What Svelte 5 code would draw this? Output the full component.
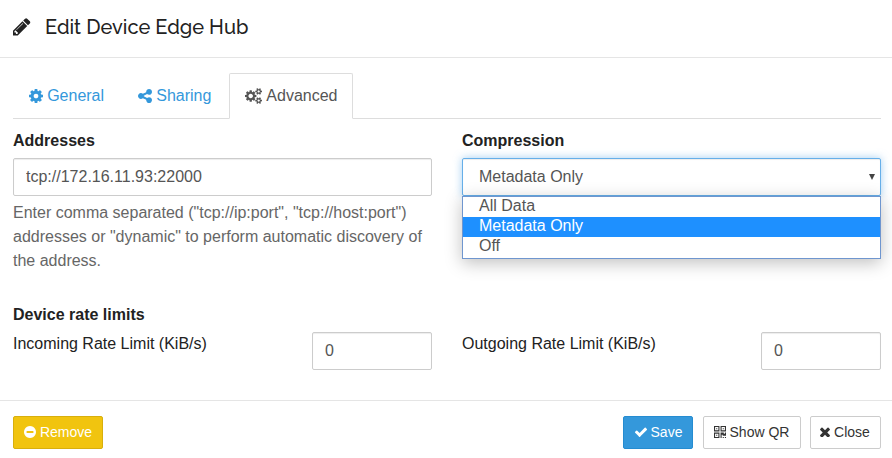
<script>
  const icons = {
    pencil: { box: '128 128 1536 1536', d: 'M491 1536l91-91-235-235-91 91v107h128v128h107zm523-928q0-22-22-22-10 0-17 7l-542 542q-7 7-7 17 0 22 22 22 10 0 17-7l542-542q7-7 7-17zm-54-192l416 416-832 832h-416v-416zm683 96q0 53-37 90l-166 166-416-416 166-165q36-38 90-38 53 0 91 38l235 234q37 39 37 91z' },
    cog: { box: '128 128 1536 1536', d: 'M1152 896q0-106-75-181t-181-75-181 75-75 181 75 181 181 75 181-75 75-181zm512-109v222q0 12-8 23t-20 13l-185 28q-19 54-39 91 35 50 107 138 10 12 10 25t-9 23q-27 37-99 108t-94 71q-12 0-26-9l-138-108q-44 23-91 38-16 136-29 186-7 28-36 28h-222q-14 0-24.5-8.5t-11.5-21.5l-28-184q-49-16-90-37l-141 107q-10 9-25 9-14 0-25-11-126-114-165-168-7-10-7-23 0-12 8-23 15-21 51-66.5t54-70.5q-27-50-41-99l-183-27q-13-2-21-12.5t-8-23.5v-222q0-12 8-23t19-13l186-28q14-46 39-92-40-57-107-138-10-12-10-24 0-10 9-23 26-36 98.5-107.5t94.5-71.5q13 0 26 10l138 107q44-23 91-38 16-136 29-186 7-28 36-28h222q14 0 24.5 8.5t11.5 21.5l28 184q49 16 90 37l142-107q9-9 24-9 13 0 25 10 129 119 165 170 7 8 7 22 0 12-8 23-15 21-51 66.5t-54 70.5q26 50 41 98l183 28q13 2 21 12.5t8 23.5z' },
    share: { box: '128 128 1536 1536', d: 'M1344 1024q133 0 226.5 93.5t93.5 226.5-93.5 226.5-226.5 93.5-226.5-93.5-93.5-226.5q0-12 2-34l-360-180q-92 86-218 86-133 0-226.5-93.5t-93.5-226.5 93.5-226.5 226.5-93.5q126 0 218 86l360-180q-2-22-2-34 0-133 93.5-226.5t226.5-93.5 226.5 93.5 93.5 226.5-93.5 226.5-226.5 93.5q-126 0-218-86l-360 180q2 22 2 34t-2 34l360 180q92-86 218-86z' },
    cogs: { box: '0 0 1920 1792', d: 'M896 896q0-106-75-181t-181-75-181 75-75 181 75 181 181 75 181-75 75-181zm768 512q0-52-38-90t-90-38-90 38-38 90q0 53 37.5 90.5t90.5 37.5 90.5-37.5 37.5-90.5zm0-1024q0-52-38-90t-90-38-90 38-38 90q0 53 37.5 90.5t90.5 37.5 90.5-37.5 37.5-90.5zm-384 421v185q0 10-7 19.5t-16 10.5l-155 24q-11 35-32 76 34 48 90 115 7 11 7 20 0 12-7 19-23 30-82.5 89.5t-78.5 59.5q-11 0-21-7l-115-90q-37 19-77 31-11 108-23 155-7 24-30 24h-186q-11 0-20-7.5t-10-17.5l-23-153q-34-10-75-31l-118 89q-7 7-20 7-11 0-21-8-144-133-144-160 0-9 7-19 10-14 41-53t47-61q-23-44-35-82l-152-24q-10-1-17-9.5t-7-19.5v-185q0-10 7-19.5t16-10.5l155-24q11-35 32-76-34-48-90-115-7-11-7-20 0-12 7-20 22-30 82-89t79-59q11 0 21 7l115 90q34-18 77-32 11-108 23-154 7-24 30-24h186q11 0 20 7.5t10 17.5l23 153q34 10 75 31l118-89q8-7 20-7 11 0 21 8 144 133 144 160 0 8-7 19-12 16-42 54t-45 60q23 48 34 82l152 23q10 2 17 10.5t7 19.5zm640 533v140q0 16-149 31-12 27-30 52 51 113 51 138 0 4-4 7-122 71-124 71-8 0-46-47t-52-68q-20 2-30 2t-30-2q-14 21-52 68t-46 47q-2 0-124-71-4-3-4-7 0-25 51-138-18-25-30-52-149-15-149-31v-140q0-16 149-31 13-29 30-52-51-113-51-138 0-4 4-7 4-2 35-20t59-34 30-16q8 0 46 46.5t52 67.5q20-2 30-2t30 2q51-71 92-112l6-2q4 0 124 70 4 3 4 7 0 25-51 138 17 23 30 52 149 15 149 31zm0-1024v140q0 16-149 31-12 27-30 52 51 113 51 138 0 4-4 7-122 71-124 71-8 0-46-47t-52-68q-20 2-30 2t-30-2q-14 21-52 68t-46 47q-2 0-124-71-4-3-4-7 0-25 51-138-18-25-30-52-149-15-149-31v-140q0-16 149-31 13-29 30-52-51-113-51-138 0-4 4-7 4-2 35-20t59-34 30-16q8 0 46 46.5t52 67.5q20-2 30-2t30 2q51-71 92-112l6-2q4 0 124 70 4 3 4 7 0 25-51 138 17 23 30 52 149 15 149 31z' },
    minus: { box: '128 128 1536 1536', d: 'M1344 960v-128q0-26-19-45t-45-19h-768q-26 0-45 19t-19 45v128q0 26 19 45t45 19h768q26 0 45-19t19-45zm320-64q0 209-103 385.5t-279.5 279.5-385.5 103-385.5-103-279.5-279.5-103-385.5 103-385.5 279.5-279.5 385.5-103 385.5 103 279.5 279.5 103 385.5z' },
    check: { box: '0 128 1792 1536', d: 'M1671 566q0 40-28 68l-724 724-136 136q-28 28-68 28t-68-28l-136-136-362-362q-28-28-28-68t28-68l136-136q28-28 68-28t68 28l294 295 656-657q28-28 68-28t68 28l136 136q28 28 28 68z' },
    qr: { box: '0 0 1408 1408', d: 'M384 1024v128h-128v-128h128zm0-768v128h-128v-128h128zm768 0v128h-128v-128h128zm-1024 1023h384v-383h-384v383zm0-767h384v-384h-384v384zm768 0h384v-384h-384v384zm-256 256v640h-640v-640h640zm512 512v128h-128v-128h128zm256 0v128h-128v-128h128zm0-512v384h-384v-128h-128v384h-128v-640h384v128h128v-128h128zm-768-768v640h-640v-640h640zm768 0v640h-640v-640h640z' },
    times: { box: '298 298 1196 1196', d: 'M1490 1322q0 40-28 68l-136 136q-28 28-68 28t-68-28l-294-294-294 294q-28 28-68 28t-68-28l-136-136q-28-28-28-68t28-68l294-294-294-294q-28-28-28-68t28-68l136-136q28-28 68-28t68 28l294 294 294-294q28-28 68-28t68 28l136 136q28 28 28 68t-28 68l-294 294 294 294q28 28 28 68z' }
  };
  const tabs = [
    { icon: 'cog', label: 'General' },
    { icon: 'share', label: 'Sharing' },
    { icon: 'cogs', label: 'Advanced' }
  ];
  const options = ['All Data', 'Metadata Only', 'Off'];
  const limits = ['Incoming Rate Limit (KiB/s)', 'Outgoing Rate Limit (KiB/s)'];
  let active = $state('Advanced');
  let selected = $state('Metadata Only');
</script>

{#snippet icon(name)}
  <svg class="icon {name}" viewBox={icons[name].box} fill="currentColor" aria-hidden="true"><path d={icons[name].d} /></svg>
{/snippet}

<div class="dialog">
  <header>
    {@render icon('pencil')}
    <h4>Edit Device Edge Hub</h4>
  </header>

  <main>
    <nav>
      {#each tabs as tab}
        <button class="tab" class:active={tab.label === active} onclick={() => (active = tab.label)}>
          {@render icon(tab.icon)}<span>{tab.label}</span>
        </button>
      {/each}
    </nav>

    <div class="columns fields">
      <section>
        <label for="addresses">Addresses</label>
        <input id="addresses" class="control" type="text" value="tcp://172.16.11.93:22000" />
        <p>Enter comma separated ("tcp://ip:port", "tcp://host:port") addresses or "dynamic" to perform automatic discovery of the address.</p>
      </section>
      <section>
        <label for="compression">Compression</label>
        <div class="select">
          <button id="compression" class="control focused"><span>{selected}</span><i class="arrow"></i></button>
          <div class="menu" role="listbox">
            {#each options as option}
              <button class="option" role="option" aria-selected={option === selected} class:selected={option === selected} onclick={() => (selected = option)}>{option}</button>
            {/each}
          </div>
        </div>
      </section>
    </div>

    <div class="group-title">Device rate limits</div>
    <div class="columns">
      {#each limits as limit}
        <section class="limit">
          <span>{limit}</span>
          <input class="control" type="text" value="0" aria-label={limit} />
        </section>
      {/each}
    </div>
  </main>

  <footer>
    <button class="btn remove">{@render icon('minus')}<span>Remove</span></button>
    <div class="actions">
      <button class="btn save">{@render icon('check')}<span>Save</span></button>
      <button class="btn show">{@render icon('qr')}<span>Show QR</span></button>
      <button class="btn close">{@render icon('times')}<span>Close</span></button>
    </div>
  </footer>
</div>

<style>
  :global(body) { background: #fff; }
  * { box-sizing: border-box; }
  .dialog {
    width: 892px;
    height: 458px;
    overflow: hidden;
    display: flex;
    flex-direction: column;
    font: 16px/24px "Liberation Sans", Arial, sans-serif;
    color: #222;
  }
  button, input { font: inherit; color: inherit; margin: 0; cursor: pointer; }
  .icon { display: block; flex: none; }
  header {
    height: 58px;
    padding: 0 13px 3px;
    display: flex;
    align-items: center;
    border-bottom: 1px solid #e5e5e5;
  }
  h4 {
    margin: 0 0 0 14.5px;
    font: 500 20px/24px Raleway, Lato, sans-serif;
    letter-spacing: 0;
  }
  .pencil { width: 17.5px; height: 17.5px; }
  main { height: 342px; padding: 15px 11px 0 13px; }
  nav { display: flex; gap: 2px; height: 46px; border-bottom: 1px solid #ddd; }
  .tab {
    height: 46px;
    padding: 0 15px 1px;
    display: flex;
    align-items: center;
    gap: 4.45px;
    border: 1px solid transparent;
    border-radius: 2px 2px 0 0;
    background: none;
    color: #3498db;
  }
  .tab.active { width: 124px; gap: 3.9px; background: #fff; color: #555; border-color: #ddd #ddd #fff; }
  .cog, .share { width: 14px; height: 14px; margin-right: -0.3px; }
  .cogs { width: 17.1px; height: 16px; }
  .columns { display: flex; gap: 30px; }
  .fields { height: 174px; padding-top: 10px; }
  section { width: 419px; }
  label { display: block; height: 29px; font-weight: 700; }
  .control {
    display: block;
    width: 100%;
    height: 38px;
    padding: 0 12px 1px;
    border: 1px solid #ccc;
    border-radius: 2px;
    background: #fff;
    color: #555;
    box-shadow: inset 0 1px 1px rgba(0, 0, 0, 0.075);
    outline: none;
  }
  p { margin: 5px 0 0; color: #666; }
  .select { position: relative; }
  .focused {
    display: flex;
    align-items: center;
    justify-content: space-between;
    padding: 0 5px 1px 16px;
    border-color: #66afe9;
    box-shadow: inset 0 1px 1px rgba(0, 0, 0, 0.075), 0 0 8px rgba(102, 175, 233, 0.6);
  }
  .arrow { border: solid transparent; border-width: 6px 3px 0; border-top-color: #444; }
  .menu {
    position: absolute;
    top: 38px;
    left: 0;
    width: 419px;
    height: 63px;
    border: 1px solid #6f96cf;
    background: #fff;
    box-shadow: 0 4px 16px rgba(0, 0, 0, 0.25);
  }
  .option {
    display: block;
    width: 100%;
    height: 20px;
    padding: 0 16px 2px;
    border: 0;
    background: none;
    color: #555;
    text-align: left;
    line-height: 18px;
  }
  .option.selected { background: #1e90ff; color: #fff; }
  .group-title { height: 29px; margin-top: 10px; font-weight: 700; }
  .limit { display: flex; justify-content: space-between; }
  .limit .control { width: 120px; }
  footer {
    height: 58px;
    padding: 15px 11px 0 13px;
    display: flex;
    justify-content: space-between;
    align-items: flex-start;
    border-top: 1px solid #e5e5e5;
  }
  .actions { display: flex; }
  .btn {
    height: 33px;
    padding: 0 0 1px;
    display: flex;
    align-items: center;
    justify-content: center;
    gap: 4px;
    border: 1px solid #ccc;
    border-radius: 2px;
    background: #fff;
    color: #333;
    font-size: 14px;
    line-height: 21px;
  }
  .remove { width: 90px; background: #f1c40f; border-color: #d8af0d; color: #fff; }
  .save { width: 70px; margin-right: 10px; background: #3498db; border-color: #258cd1; color: #fff; }
  .show { width: 98px; margin-right: 9px; padding-right: 1px; }
  .close { width: 71px; padding-right: 1px; }
  .minus { width: 12px; height: 12px; }
  .check { width: 14px; height: 12px; margin-right: -1px; }
  .qr { width: 12px; height: 12px; }
  .times { width: 10px; height: 10px; }
</style>
